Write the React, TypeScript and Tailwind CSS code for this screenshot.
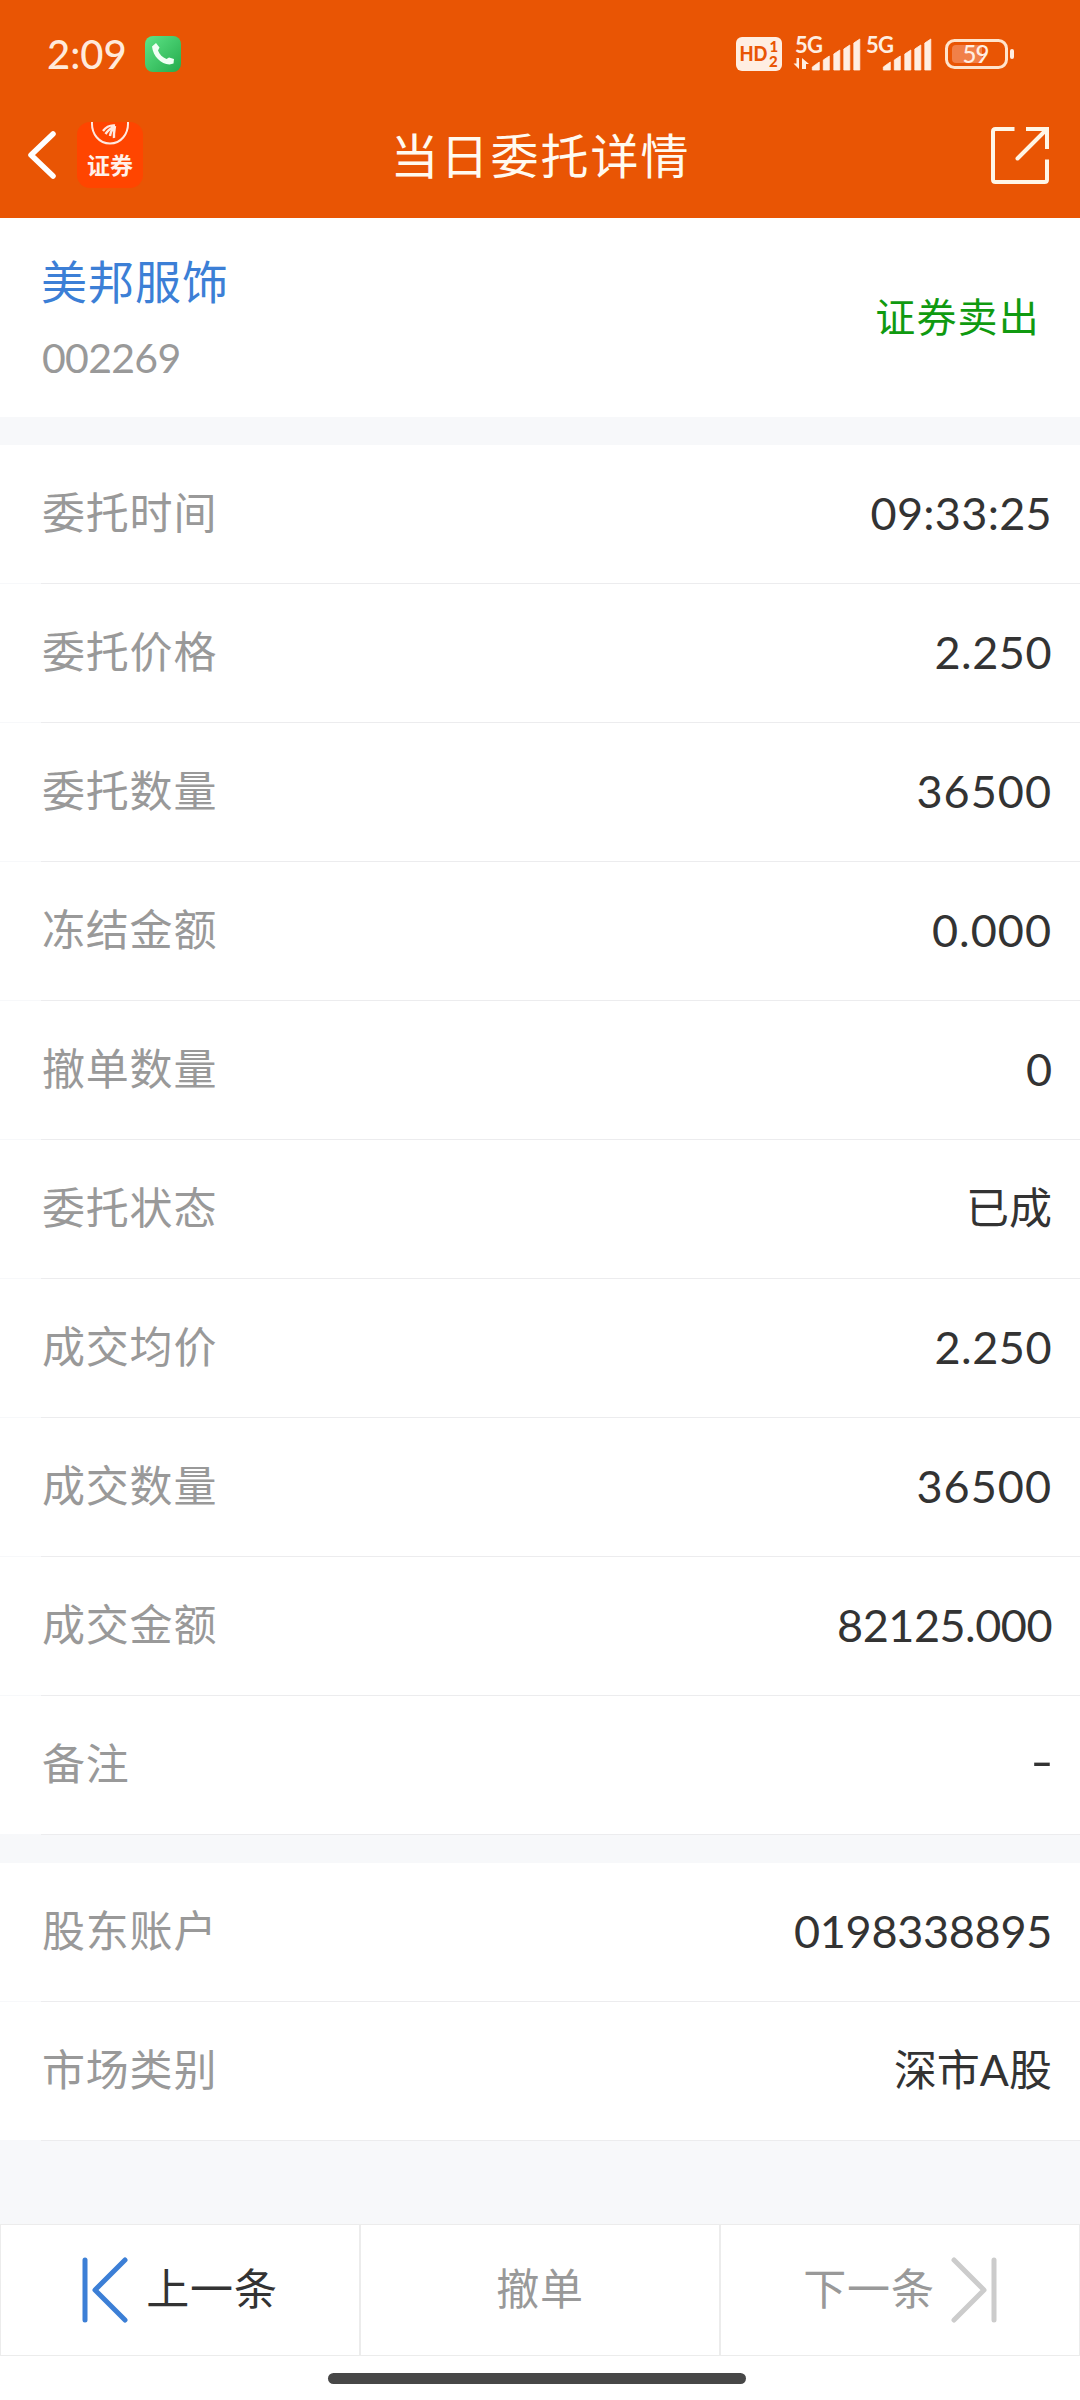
import type { ReactNode } from "react";
import clsx from "clsx";

type Field = {
  label: string;
  value: string;
  valueClass?: string;
};

const orderFields: Field[] = [
  { label: "委托时间", value: "09:33:25", valueClass: "text-[45px] tracking-[0.3px]" },
  { label: "委托价格", value: "2.250", valueClass: "text-[45px] tracking-[0.5px]" },
  { label: "委托数量", value: "36500", valueClass: "text-[45px] tracking-[1px]" },
  { label: "冻结金额", value: "0.000", valueClass: "text-[45px] tracking-[1px]" },
  { label: "撤单数量", value: "0", valueClass: "text-[45px]" },
  { label: "委托状态", value: "已成" },
  { label: "成交均价", value: "2.250", valueClass: "text-[45px] tracking-[0.5px]" },
  { label: "成交数量", value: "36500", valueClass: "text-[45px] tracking-[1px]" },
  { label: "成交金额", value: "82125.000", valueClass: "text-[45px] tracking-[-0.5px]" },
  { label: "备注", value: "-", valueClass: "text-[45px] origin-right translate-x-[2px] scale-x-140 pb-[6px]" },
];

const accountFields: Field[] = [
  { label: "股东账户", value: "0198338895", valueClass: "text-[45px] tracking-[-0.3px]" },
  { label: "市场类别", value: "深市A股" },
];

function SignalBars({ x }: { x: number }) {
  return (
    <path
      transform={`translate(${x} 0)`}
      d="M0 70v-3l7-5v8zM11 70V60l6-4v14zM21.5 70V54l6-4v20zM31.5 70V49l6-4v25zM41.5 70V43l6-4v31z"
      stroke="#ffeee2"
      strokeWidth="0.8"
      strokeLinejoin="round"
    />
  );
}

function StatusIcons() {
  return (
    <svg
      className="h-[60px] w-[284px]"
      viewBox="734 24 284 60"
      fill="#ffeee2"
      fontFamily="Lato, sans-serif"
    >
      <rect x="736" y="37" width="46" height="34" rx="6" />
      <g fill="#e95504" fontWeight="900">
        <text x="739.5" y="61" fontSize="20.5" textLength="28" lengthAdjust="spacingAndGlyphs">HD</text>
        <text x="769.5" y="52" fontSize="15">1</text>
        <text x="769" y="66.5" fontSize="15">2</text>
      </g>
      <text x="795" y="52.5" fontSize="22" fontWeight="700" textLength="28">5G</text>
      <path d="M799 58v11l-5.5-5.5h3V58zM802 69V58l7 6h-3v5z" />
      <SignalBars x={812.3} />
      <text x="866" y="52.5" fontSize="22" fontWeight="700" textLength="28">5G</text>
      <SignalBars x={883.3} />
      <rect x="946.5" y="40.5" width="60" height="27" rx="8" fill="none" stroke="#ffe4cc" strokeWidth="3" />
      <path d="M956 45h26v18h-26a4 4 0 0 1-4-4V49a4 4 0 0 1 4-4z" fill="#f18048" />
      <text x="962.5" y="63" fontSize="24" fontWeight="500" textLength="27">59</text>
      <rect x="1010" y="49" width="4" height="10" rx="2" />
    </svg>
  );
}

function PhoneBadge() {
  return (
    <svg className="size-9" viewBox="0 0 36 36">
      <defs>
        <linearGradient id="call" x1="0" y1="0" x2="1" y2="1">
          <stop offset="0" stopColor="#5ee487" />
          <stop offset="1" stopColor="#24ab4c" />
        </linearGradient>
      </defs>
      <rect width="36" height="36" rx="8" fill="url(#call)" />
      <path
        d="M7 10.500 11 7l3.500 4.500-1.500 3c1.500 4 4.500 7 8.500 8.500l2.500-1.500 5 1.500-.5 4.500-4 1C16 28 8 20.500 7 10.500z"
        fill="#f0fff4"
      />
    </svg>
  );
}

function BrokerLogo() {
  return (
    <div className="flex h-[66px] w-[66px] flex-col items-center overflow-hidden rounded-[13px] bg-[#ff4500]">
      <svg className="h-[26px] w-[46px] shrink-0" viewBox="0 0 46 26" fill="none">
        <path d="M5 0c-.6 12 7 21.500 18 21.500S41.600 12 41 0" stroke="#ffe9e0" strokeWidth="2" />
        <path d="M16 9c3-4 7-6 12-5.500M18.500 12c2.500-4 5.500-6 9.500-8M23 14c.5-4 2.500-7 5-10M27 16c-.5-4 .5-8 1-12" stroke="#ffe9e0" strokeWidth="2.400" />
      </svg>
      <span className="mt-[2px] font-['Noto_Sans_CJK_SC',sans-serif] text-[23px] leading-[28px] font-bold text-[#fff1ea]">
        证券
      </span>
    </div>
  );
}

function Header() {
  return (
    <header className="h-[218px] bg-[#e95504]">
      <div className="flex h-[108px] items-center justify-between pr-[62px] pl-[47px]">
        <div className="flex items-center gap-[19px]">
          <span className="w-[79px] text-[40px] leading-none font-medium text-[#ffeadb]">2:09</span>
          <PhoneBadge />
        </div>
        <StatusIcons />
      </div>
      <div className="grid h-[94px] grid-cols-3 items-center pr-[30px] pl-[26px]">
        <div className="flex items-center gap-[19px]">
          <svg className="h-[52px] w-[32px]" viewBox="0 0 32 52" fill="none">
            <path d="M27 5 5 26l22 21" stroke="#fff" strokeWidth="5.500" strokeLinecap="round" strokeLinejoin="round" />
          </svg>
          <BrokerLogo />
        </div>
        <h1 className="pt-[1px] pl-[5px] text-center text-[48px] leading-none tracking-[2px] whitespace-nowrap text-[#fffaf0]">
          当日委托详情
        </h1>
        <svg className="h-[60px] w-[60px] justify-self-end" viewBox="0 0 60 60" fill="none" stroke="#fff6e6" strokeWidth="4">
          <path d="M24.500 4H5.500Q3 4 3 6.500v48Q3 57 5.500 57h49Q57 57 57 54.500V34.500" />
          <path d="M36 4h21v20" />
          <path d="M57 4 27.500 33.500" strokeLinecap="round" />
        </svg>
      </div>
    </header>
  );
}

function SecuritySummary() {
  return (
    <section className="flex h-[199px] items-center justify-between bg-white pr-[40px] pl-[41px]">
      <div className="flex flex-col gap-[20px] pt-[5px]">
        <h2 className="text-[46px] leading-[56px] tracking-[1px] text-[#3c7fd6]">美邦服饰</h2>
        <p className="pl-[1px] text-[41px] leading-[56px] tracking-[-0.7px] text-[#999999]">002269</p>
      </div>
      <span className="pb-[2px] text-[40px] leading-[56px] tracking-[1.200px] text-[#109a10]">证券卖出</span>
    </section>
  );
}

function FieldRow({ label, value, valueClass = "text-[43px] pb-[1px]" }: Field) {
  return (
    <div className="flex h-[139px] bg-white">
      <div className="w-[41px] border-b border-[#f7f8fa]" />
      <div className="flex flex-1 items-center justify-between border-b border-[#ececee] pr-[28px] pl-[1px]">
        <dt className="pb-[1px] text-[43px] tracking-[0.8px] text-[#999999]">{label}</dt>
        <dd className={clsx("text-[#333333]", valueClass)}>{value}</dd>
      </div>
    </div>
  );
}

function FieldList({ fields }: { fields: Field[] }) {
  return (
    <dl>
      {fields.map((field) => (
        <FieldRow key={field.label} {...field} />
      ))}
    </dl>
  );
}

function StepIcon({ className }: { className: string }) {
  return (
    <svg
      className={clsx("h-[66px] w-[46px]", className)}
      viewBox="0 0 46 66"
      fill="none"
      stroke="currentColor"
      strokeWidth="5"
      strokeLinecap="round"
    >
      <path d="M3 3v60" />
      <path d="M43 3 13 33l30 30" strokeLinejoin="round" />
    </svg>
  );
}

function ActionButton({ className, children }: { className: string; children: ReactNode }) {
  return (
    <button
      className={clsx(
        "flex h-[132px] items-center justify-center border border-[#ececec] bg-white text-[43px] tracking-[0.8px]",
        className,
      )}
    >
      {children}
    </button>
  );
}

function ActionBar() {
  return (
    <footer className="bg-white">
      <div className="grid grid-cols-3">
        <ActionButton className="gap-[18px] text-[#333333]">
          <StepIcon className="text-[#3c7fd6]" />
          <span className="pb-[2px]">上一条</span>
        </ActionButton>
        <ActionButton className="pb-[2px] text-[#999999]">撤单</ActionButton>
        <ActionButton className="gap-[16px] text-[#999999]">
          <span className="pb-[2px]">下一条</span>
          <StepIcon className="rotate-180 text-[#cccccc]" />
        </ActionButton>
      </div>
      <div className="flex h-[44px] justify-center pt-[17px] pr-[6px]">
        <div className="h-[11px] w-[418px] rounded-full bg-[#474747]" />
      </div>
    </footer>
  );
}

export default function App() {
  return (
    <div className="flex h-[2400px] w-[1080px] flex-col overflow-hidden bg-[#f7f8fa] font-['Lato','Noto_Sans_CJK_SC',sans-serif]">
      <Header />
      <SecuritySummary />
      <main className="flex flex-1 flex-col gap-7 pt-7">
        <FieldList fields={orderFields} />
        <FieldList fields={accountFields} />
      </main>
      <ActionBar />
    </div>
  );
}
